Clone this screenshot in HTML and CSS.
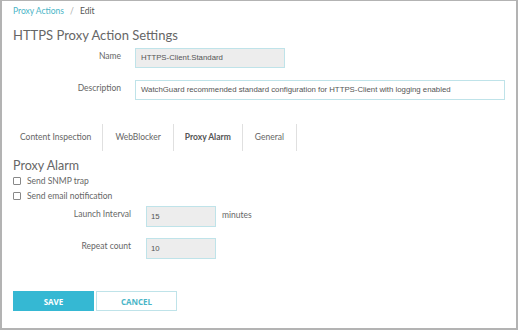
FILE: index.html
```html
<!DOCTYPE html>
<html>
<head>
<meta charset="utf-8">
<link rel="stylesheet" href="styles.css">
</head>
<body>
<div class="frame">
  <div class="crumbs"><a class="crumb-link">Proxy Actions</a><span class="crumb-sep">/</span><span class="crumb-cur">Edit</span></div>
  <h1 class="title">HTTPS Proxy Action Settings</h1>
  <div class="form-grid">
    <label class="lbl">Name</label>
    <div class="field field-name">HTTPS-Client.Standard</div>
    <label class="lbl">Description</label>
    <div class="field field-desc">WatchGuard recommended standard configuration for HTTPS-Client with logging enabled</div>
  </div>
  <div class="tabs">
    <div class="tab tab-first">Content Inspection</div>
    <div class="tab">WebBlocker</div>
    <div class="tab tab-active">Proxy Alarm</div>
    <div class="tab">General</div>
  </div>
  <h2 class="section">Proxy Alarm</h2>
  <label class="check"><input type="checkbox" class="box"><span>Send SNMP trap</span></label>
  <label class="check"><input type="checkbox" class="box"><span>Send email notification</span></label>
  <div class="alarm-grid">
    <label class="lbl">Launch Interval</label>
    <div class="field field-num">15</div>
    <span class="unit">minutes</span>
    <label class="lbl">Repeat count</label>
    <div class="field field-num">10</div>
    <span></span>
  </div>
  <div class="actions">
    <button class="btn btn-save">SAVE</button>
    <button class="btn btn-cancel">CANCEL</button>
  </div>
</div>
</body>
</html>
```
FILE: styles.css
```css
* { box-sizing: border-box; }
html, body { margin: 0; padding: 0; background: #fff; }
.frame {
  width: 518px;
  height: 330px;
  border: 2px solid #b3b3b3;
  border-top-width: 1px;
  padding: 5px 0 0 11px;
  font-family: Lato, "Open Sans", sans-serif;
  color: #666;
}
.crumbs {
  font-size: 8.5px;
  line-height: 11px;
  height: 11px;
}
.crumb-link { color: #4ab5c7; }
.crumb-sep { color: #aaa; margin: 0 6px; }
.crumb-cur { color: #555; }
.title {
  margin: 10px 0 0 0;
  font-weight: 400;
  font-size: 13px;
  line-height: 16px;
  color: #666;
}
.form-grid {
  display: grid;
  grid-template-columns: 108px auto;
  column-gap: 14px;
  row-gap: 12px;
  margin-top: 5px;
  justify-items: start;
}
.lbl {
  justify-self: end;
  font-size: 8.5px;
  line-height: 11px;
  padding-top: 3px;
  color: #666;
}
.field {
  height: 20px;
  border: 1px solid #bfe3e9;
  font-family: "Liberation Sans", Arial, sans-serif;
  font-size: 7.8px;
  line-height: 18px;
  padding-left: 5px;
  color: #555;
}
.field-name { width: 150px; background: #ededed; }
.field-desc { width: 370px; background: #fff; }
.tabs {
  display: flex;
  margin-top: 24px;
  height: 27px;
}
.tab {
  font-size: 8.5px;
  line-height: 27px;
  padding: 0 12px;
  border-right: 1px solid #e0e0e0;
  color: #666;
}
.tab-first { padding: 0 11px 0 7px; }
.tab-active { font-weight: 700; color: #555; padding: 0 11px; }
.section {
  margin: 7px 0 0 0;
  font-weight: 400;
  font-size: 12.5px;
  line-height: 15px;
  color: #666;
}
.check {
  display: flex;
  align-items: center;
  height: 15px;
  font-size: 8.5px;
  color: #666;
}
.box {
  appearance: none;
  -webkit-appearance: none;
  width: 8px;
  height: 8px;
  margin: 0 6px 0 0;
  border: 1px solid #888;
  border-radius: 1px;
  background: #fff;
}
.alarm-grid {
  display: grid;
  grid-template-columns: 118px auto auto;
  column-gap: 15px;
  row-gap: 11px;
  margin-top: 3px;
  justify-content: start;
  align-items: start;
}
.alarm-grid .lbl { padding-top: 3px; }
.field-num { width: 70px; height: 21px; background: #ededed; line-height: 19px; padding-left: 4px; }
.unit {
  margin-left: -9px;
  font-size: 8.5px;
  line-height: 11px;
  padding-top: 4px;
}
.actions {
  display: flex;
  gap: 2px;
  margin-top: 32px;
}
.btn {
  width: 81px;
  height: 20px;
  font-family: "Open Sans", sans-serif;
  font-weight: 700;
  font-size: 8px;
  padding: 0;
  border: 1px solid #bfe3e9;
  cursor: pointer;
}
.btn-save { background: #35b8d3; border-color: #35b8d3; color: #fff; }
.btn-cancel { background: #fff; color: #4ab5c7; }
```
